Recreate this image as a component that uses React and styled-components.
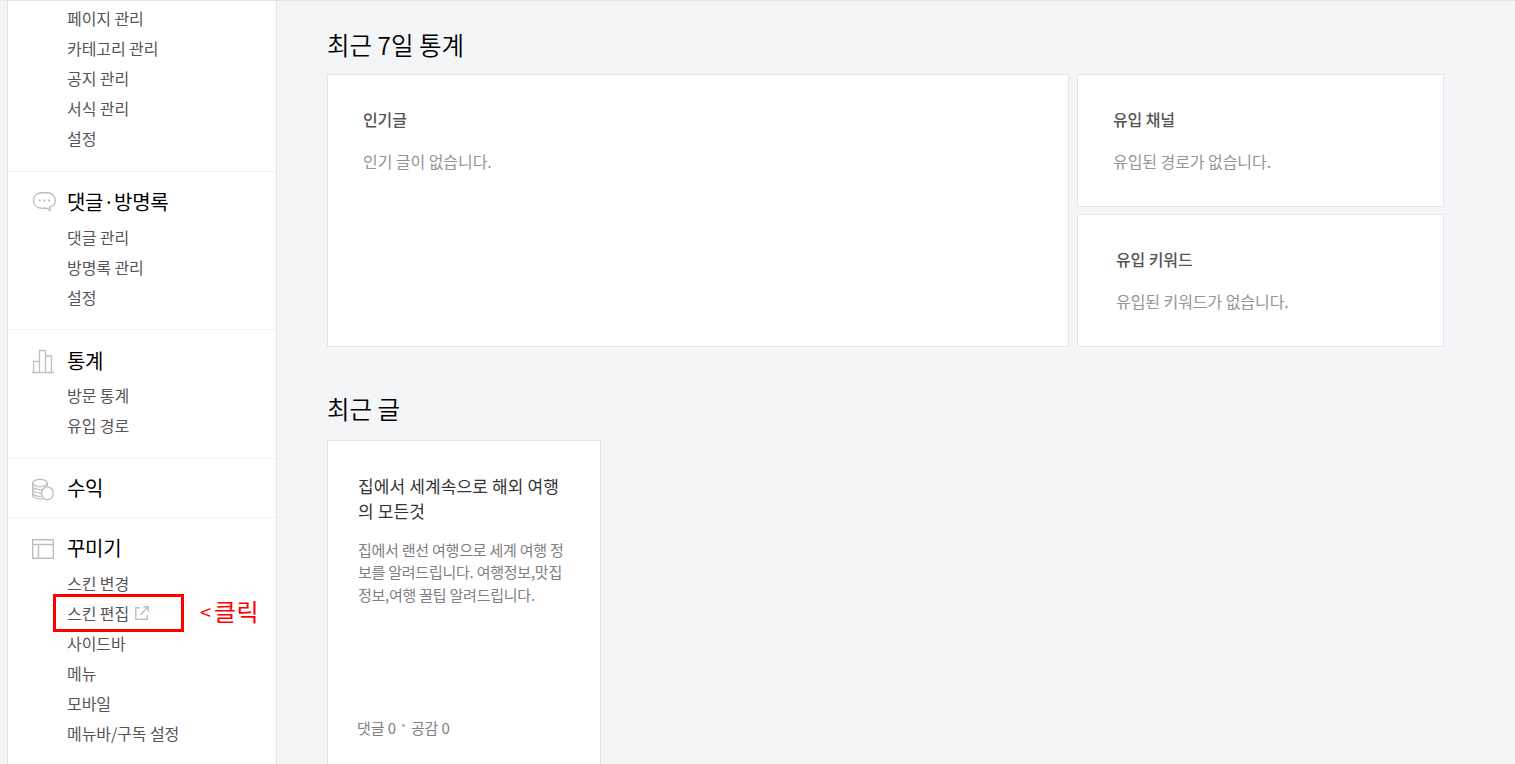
import React from 'react';
import styled, { createGlobalStyle } from 'styled-components';

const GlobalStyle = createGlobalStyle`
  * {
    box-sizing: border-box;
  }

  body {
    margin: 0;
    overflow: hidden;
    background: #f3f5f7;
    font-family: 'Noto Sans CJK KR', sans-serif;
  }

  h2, h3, p, ul {
    margin: 0;
    padding: 0;
    font-weight: 400;
  }

  ul {
    list-style: none;
  }
`;

const StyledPage = styled.div`
  display: flex;
  height: 764px;
  padding-left: 7px;
  overflow: hidden;
  border-top: 1px solid #e4e6ea;
`;

const StyledSidebar = styled.nav`
  flex: none;
  width: 270px;
  border: solid #e0e5ee;
  border-width: 0 1px;
  background: #fff;
`;

const StyledGroup = styled.section`
  padding: ${({ $top }) => $top}px 0 ${({ $bottom }) => $bottom}px;

  & + & {
    border-top: 1px solid #f0f2f5;
  }
`;

const StyledGroupTitle = styled.h2`
  display: flex;
  align-items: center;
  height: 30px;
  margin-bottom: ${({ $gap }) => $gap}px;
  padding: 0 0 2px 23px;
  color: #000;
  font-size: 20px;
  letter-spacing: -0.3px;
  white-space: nowrap;

  svg {
    flex: none;
    width: 26px;
    height: 28px;
    margin-right: 10px;
    fill: none;
    stroke: #bfbfbf;
  }
`;

const StyledItem = styled.li`
  position: relative;
  display: flex;
  align-items: center;
  height: 30px;
  padding: 0 0 2px 59px;
  color: #555;
  font-size: 16px;
  letter-spacing: -0.08px;
  white-space: nowrap;

  svg {
    margin-left: 6px;
    fill: none;
    stroke: #bfbfbf;
  }
`;

const StyledMarker = styled.span`
  position: absolute;
  top: -5px;
  left: 45px;
  width: 131px;
  height: 38px;
  border: 3px solid #f00;
`;

const StyledNote = styled.span`
  position: absolute;
  top: -6px;
  left: 191px;
  display: flex;
  align-items: center;
  height: 34px;
  color: #f00;
  font-size: 24px;
  letter-spacing: 0.4px;

  small {
    width: 15px;
    padding: 3px 0 0 1px;
    font-size: 20px;
    letter-spacing: 0;
  }
`;

const StyledMain = styled.main`
  flex: none;
  width: 1117px;
  margin-left: 50px;
`;

const StyledHeading = styled.h2`
  height: 36px;
  margin-top: ${({ $top }) => $top}px;
  margin-bottom: ${({ $bottom }) => $bottom}px;
  color: #000;
  font-size: 24.5px;
  font-weight: 350;
  line-height: 36px;
  letter-spacing: 0;
`;

const StyledStats = styled.div`
  display: grid;
  grid-template-columns: 742px 367px;
  grid-template-rows: 133px 133px;
  gap: 7px 8px;
`;

const StyledCard = styled.section`
  grid-row: ${({ $tall }) => ($tall ? 'span 2' : 'auto')};
  padding: 29px ${({ $inset }) => $inset}px;
  border: 1px solid #e0e5ee;
  background: #fff;

  &:first-child,
  &:last-child {
    box-shadow: 0 1px 0 #fbfcfd;
  }

  h3 {
    color: #555;
    font-size: 16px;
    font-weight: 500;
    line-height: 30px;
    letter-spacing: -0.1px;
  }

  p {
    margin-top: 12px;
    color: #959595;
    font-size: 16px;
    line-height: 30px;
    letter-spacing: -0.06px;
  }
`;

const StyledPost = styled.article`
  display: flex;
  flex-direction: column;
  width: 274px;
  height: 340px;
  padding: 32px 30px 0;
  border: 1px solid #e0e5ee;
  background: #fff;

  h3 {
    color: #333;
    font-size: 17px;
    line-height: 25px;
    letter-spacing: 0.13px;
    white-space: nowrap;
  }

  p {
    margin-top: 16px;
    color: #808080;
    font-size: 15px;
    line-height: 22.4px;
    letter-spacing: -0.24px;
    white-space: nowrap;
  }
`;

const StyledMeta = styled.div`
  display: flex;
  align-items: center;
  height: 24px;
  margin: 109px 0 0 -1px;
  color: #808080;
  font-size: 15px;
  letter-spacing: -0.1px;

  i {
    width: 3px;
    height: 3px;
    margin: -4px 6px 0;
    background: #bfbfbf;
  }
`;

const CommentIcon = () => (
  <svg viewBox="0 0 26 28" strokeWidth="1.4">
    <path d="M18.6 20.2C22.8 19.3 24.3 16.6 24.3 13.6C24.3 9 21.2 5.8 16 5.8H10.8C5.6 5.8 2.5 9 2.5 13.5C2.5 18 5.6 21.2 10.8 21.2H15.6L19.2 23.6L18.6 20.2Z" />
    <path d="M7.8 13.4h2M12.4 13.4h2M17 13.4h2" strokeWidth="2" />
  </svg>
);

const ChartIcon = () => (
  <svg viewBox="0 -2 26 28" strokeWidth="1.3">
    <path d="M1 24.5h22M2.6 24V13.5h5.8M8.5 24V2.5h6V24M14.5 8h6v16" />
  </svg>
);

const CoinsIcon = () => (
  <svg viewBox="0 -2 26 28" strokeWidth="1.3">
    <ellipse cx="9" cy="8" rx="7.3" ry="3.6" />
    <path d="M1.7 8v3.4c0 1.5 3 3.3 7.3 3.3 1.6 0 2.6-.2 3.5-.6M16.3 8v3.5M1.7 11.4v3.4c0 1.5 3 3.3 7.3 3.3h1.2M1.7 14.8v3.4c0 1.5 3 3.2 7.3 3.2h1.3M1.7 18.2v2.4c0 1.5 3 3.2 7.3 3.2h3" />
    <ellipse cx="16.4" cy="18.3" rx="5.9" ry="6.4" />
  </svg>
);

const LayoutIcon = () => (
  <svg viewBox="0 -1 26 28" strokeWidth="1.4">
    <path d="M1.7 5.7h20.6v18.6H1.7zM1.7 10.5h20.6M7.5 10.5v13.8" />
  </svg>
);

const ExternalIcon = () => (
  <svg width="14" height="14" viewBox="0 0 14 14" strokeWidth="1.4">
    <path d="M5 1.7H.8v11.5h11.5V9M8.2.8h5v5M13 1L5.5 8.5" />
  </svg>
);

const menu = [
  {
    top: 3,
    bottom: 17,
    items: ['페이지 관리', '카테고리 관리', '공지 관리', '서식 관리', '설정'],
  },
  {
    title: '댓글·방명록',
    icon: CommentIcon,
    top: 15,
    bottom: 16,
    gap: 6,
    items: ['댓글 관리', '방명록 관리', '설정'],
  },
  {
    title: '통계',
    icon: ChartIcon,
    top: 16,
    bottom: 17,
    gap: 5,
    items: ['방문 통계', '유입 경로'],
  },
  { title: '수익', icon: CoinsIcon, top: 14, bottom: 14, gap: 0, items: [] },
  {
    title: '꾸미기',
    icon: LayoutIcon,
    top: 15,
    bottom: 15,
    gap: 6,
    items: ['스킨 변경', '스킨 편집', '사이드바', '메뉴', '모바일', '메뉴바/구독 설정'],
  },
];

const Sidebar = () => (
  <StyledSidebar>
    {menu.map(({ title, icon: GroupIcon, top, bottom, gap, items }, i) => (
      <StyledGroup key={i} $top={top} $bottom={bottom}>
        {title && (
          <StyledGroupTitle $gap={gap}>
            <GroupIcon />
            {title}
          </StyledGroupTitle>
        )}
        <ul>
          {items.map(name => (
            <StyledItem key={name}>
              {name}
              {name === '스킨 편집' && (
                <>
                  <ExternalIcon />
                  <StyledMarker />
                  <StyledNote>
                    <small>&lt;</small>클릭
                  </StyledNote>
                </>
              )}
            </StyledItem>
          ))}
        </ul>
      </StyledGroup>
    ))}
  </StyledSidebar>
);

const App = () => (
  <>
    <GlobalStyle />
    <StyledPage>
      <Sidebar />
      <StyledMain>
        <StyledHeading $top={26} $bottom={11}>
          최근 7일 통계
        </StyledHeading>
        <StyledStats>
          <StyledCard $tall $inset={35}>
            <h3>인기글</h3>
            <p>인기 글이 없습니다.</p>
          </StyledCard>
          <StyledCard $inset={35}>
            <h3>유입 채널</h3>
            <p>유입된 경로가 없습니다.</p>
          </StyledCard>
          <StyledCard $inset={38}>
            <h3>유입 키워드</h3>
            <p>유입된 키워드가 없습니다.</p>
          </StyledCard>
        </StyledStats>
        <StyledHeading $top={44} $bottom={13}>
          최근 글
        </StyledHeading>
        <StyledPost>
          <h3>
            집에서 세계속으로 해외 여행
            <br />의 모든것
          </h3>
          <p>
            집에서 랜선 여행으로 세계 여행 정<br />
            보를 알려드립니다. 여행정보,맛집
            <br />
            정보,여행 꿀팁 알려드립니다.
          </p>
          <StyledMeta>
            댓글 0<i />
            공감 0
          </StyledMeta>
        </StyledPost>
      </StyledMain>
    </StyledPage>
  </>
);

export default App;
